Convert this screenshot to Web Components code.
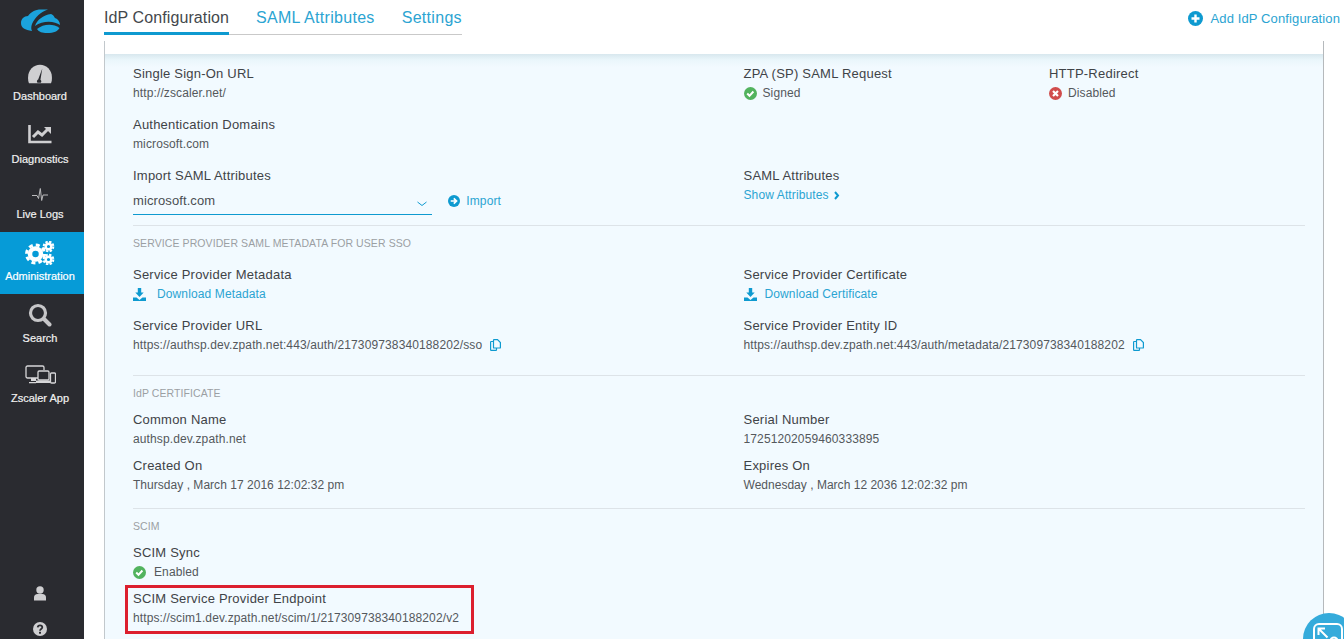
<!DOCTYPE html>
<html>
<head>
<meta charset="utf-8">
<title>IdP Configuration</title>
<style>
  html, body { margin: 0; height: 100%; overflow: hidden; background: #fff; }
  body { font-family: "Liberation Sans", Arial, sans-serif; }
</style>
</head>
<body>
<zs-app>
  <zs-sidebar slot="sidebar">
    <zs-nav-item label="Dashboard" style="--h:62px;--gap:0px">
      <svg width="26" height="22" viewBox="0 0 28 24"><path fill="#cfcfd1" d="M2 22C1 20 1 18 1 15.500 1 8 7 2 14 2s13 6 13 13.500c0 2.500 0 4.500-1 6.500z"/><path fill="#2a2b30" d="M16.500 6l-2 12.200c1.200.8 1.300 2.300.3 3.300h-3.600c-1-1.200-.6-2.900.8-3.500z"/></svg>
    </zs-nav-item>
    <zs-nav-item label="Diagnostics" style="--h:63px;--gap:3px">
      <svg width="24" height="20" viewBox="0 0 24 20"><path fill="none" stroke="#cfcfd1" stroke-width="2.600" d="M1.500 1v17h22"/><path fill="none" stroke="#cfcfd1" stroke-width="3" d="M5 13l5-5 4 3 6-6"/><path fill="#cfcfd1" d="M16 3h7v7z"/></svg>
    </zs-nav-item>
    <zs-nav-item label="Live Logs" style="--h:55px;--gap:-3px">
      <svg width="16" height="16" viewBox="0 0 16 16"><path fill="none" stroke="#b9b9bb" d="M0 8.500h5l1.500 3L8.300 1.500l1.400 12L11 8h5"/></svg>
    </zs-nav-item>
    <zs-nav-item label="Administration" active style="--h:62px;--gap:1px">
      <svg width="30" height="24" viewBox="0 0 30 24">
        <g fill="none" stroke="#fff">
          <circle cx="10.500" cy="13" r="5.500" stroke-width="4.500"/><circle cx="10.500" cy="13" r="9" stroke-width="3" stroke-dasharray="4 3.070"/>
          <circle cx="23.500" cy="5.500" r="2.800" stroke-width="2.400"/><circle cx="23.500" cy="5.500" r="4.800" stroke-width="2" stroke-dasharray="2.400 1.370"/>
          <circle cx="23.500" cy="18.500" r="2.800" stroke-width="2.400"/><circle cx="23.500" cy="18.500" r="4.800" stroke-width="2" stroke-dasharray="2.400 1.370"/>
        </g>
      </svg>
    </zs-nav-item>
    <zs-nav-item label="Search" style="--h:62px;--gap:1px">
      <svg width="24" height="24" viewBox="0 0 24 24"><circle cx="10" cy="10" r="7.500" fill="none" stroke="#c6c6c8" stroke-width="3.200"/><path stroke="#c6c6c8" stroke-width="4" stroke-linecap="round" d="M16 16l5.500 5.500"/></svg>
    </zs-nav-item>
    <zs-nav-item label="Zscaler App" style="--h:60px;--gap:1px">
      <svg width="31" height="20" viewBox="0 0 31 20" fill="none" stroke="#d6d6d8" stroke-width="1.300"><path d="M13 13H2.500A1.500 1.500 0 0 1 1 11.500v-9A1.500 1.500 0 0 1 2.500 1h15A1.500 1.500 0 0 1 19 2.500V5"/><path fill="#d6d6d8" stroke="none" d="M6 13h5v3H6zM4 17h7v1.200H4z"/><rect x="13" y="6" width="11" height="9" rx="1.200"/><path fill="#d6d6d8" stroke="none" d="M11 15.500h14v2.500H11z"/><rect x="25.500" y="8" width="5" height="10" rx="1" fill="#2a2b30"/></svg>
    </zs-nav-item>
    <zs-nav-foot>
      <svg width="14" height="15" viewBox="0 0 14 15"><circle cx="7" cy="4" r="3.700" fill="#cfcfd1"/><path fill="#cfcfd1" d="M1 14.500v-3C1 9.500 2.500 8 4.500 8h5c2 0 3.500 1.500 3.500 3.500v3z"/></svg>
      <svg width="14" height="14" viewBox="0 0 14 14"><circle cx="7" cy="7" r="7" fill="#cfcfd1"/><path fill="none" stroke="#2a2b30" stroke-width="1.800" d="M4.700 5.400C4.800 4 5.800 3.300 7 3.300c1.300 0 2.300.8 2.300 2 0 1.800-2.300 1.700-2.300 3.500"/><rect x="6" y="9.800" width="2" height="1.900" fill="#2a2b30"/></svg>
    </zs-nav-foot>
  </zs-sidebar>

  <zs-header slot="header">
    <zs-tab active>IdP Configuration</zs-tab>
    <zs-tab>SAML Attributes</zs-tab>
    <zs-tab>Settings</zs-tab>
    <zs-add slot="action">Add IdP Configuration</zs-add>
  </zs-header>

  <zs-panel slot="panel">
    <zs-row style="--after:11px">
      <zs-field label="Single Sign-On URL">http://zscaler.net/</zs-field>
      <zs-field label="ZPA (SP) SAML Request"><zs-status type="ok">Signed</zs-status></zs-field>
      <zs-field label="HTTP-Redirect"><zs-status type="bad">Disabled</zs-status></zs-field>
    </zs-row>
    <zs-row style="--after:11px">
      <zs-field label="Authentication Domains">microsoft.com</zs-field>
    </zs-row>
    <zs-row style="--after:0px">
      <zs-field label="Import SAML Attributes"><zs-import>microsoft.com</zs-import></zs-field>
      <zs-field label="SAML Attributes"><zs-link>Show Attributes <svg width="6" height="9" viewBox="0 0 6 9" style="margin-left:2px"><path fill="none" stroke="#0e9ad0" stroke-width="2" d="M1 1l3 3.500L1 8"/></svg></zs-link></zs-field>
    </zs-row>

    <zs-section-head style="--top:10px;--after:13px">SERVICE PROVIDER SAML METADATA FOR USER SSO</zs-section-head>
    <zs-row style="--after:11px">
      <zs-field label="Service Provider Metadata"><zs-download gap="11">Download Metadata</zs-download></zs-field>
      <zs-field label="Service Provider Certificate"><zs-download gap="8">Download Certificate</zs-download></zs-field>
    </zs-row>
    <zs-row style="--after:20px">
      <zs-field label="Service Provider URL"><zs-copy>https://authsp.dev.zpath.net:443/auth/217309738340188202/sso</zs-copy></zs-field>
      <zs-field label="Service Provider Entity ID"><zs-copy>https://authsp.dev.zpath.net:443/auth/metadata/217309738340188202</zs-copy></zs-field>
    </zs-row>

    <zs-section-head style="--top:0px;--after:8px">IdP CERTIFICATE</zs-section-head>
    <zs-row style="--after:6px">
      <zs-field label="Common Name">authsp.dev.zpath.net</zs-field>
      <zs-field label="Serial Number">17251202059460333895</zs-field>
    </zs-row>
    <zs-row style="--after:13px">
      <zs-field label="Created On" style="--value-ls:.03px">Thursday , March 17 2016 12:02:32 pm</zs-field>
      <zs-field label="Expires On" style="--value-ls:.02px">Wednesday , March 12 2036 12:02:32 pm</zs-field>
    </zs-row>

    <zs-section-head style="--top:0px;--after:8px">SCIM</zs-section-head>
    <zs-row style="--after:6px">
      <zs-field label="SCIM Sync"><zs-status type="ok" wide>Enabled</zs-status></zs-field>
    </zs-row>
    <zs-row style="--after:0px">
      <zs-highlight><zs-field label="SCIM Service Provider Endpoint">https://scim1.dev.zpath.net/scim/1/217309738340188202/v2</zs-field></zs-highlight>
    </zs-row>
  </zs-panel>

  <zs-expand slot="overlay"></zs-expand>
</zs-app>

<script>
  function shadow(host, html) {
    host.attachShadow({ mode: 'open' });
    host.shadowRoot.innerHTML = html;
  }

  // plain elements: only markup and styles, no attributes to read
  function simple(name, html) {
    customElements.define(name, class extends HTMLElement {
      connectedCallback() { if (!this.shadowRoot) shadow(this, html); }
    });
  }

  const BLUE = '#0e9ad0';
  const LINK = '#2ba4d2';

  simple('zs-app', `
    <style>
      :host { display: flex; width: 1344px; height: 639px; overflow: hidden; position: relative; }
      .main { flex: 1; min-width: 0; display: flex; flex-direction: column; }
    </style>
    <slot name="sidebar"></slot>
    <div class="main"><slot name="header"></slot><slot name="panel"></slot></div>
    <slot name="overlay"></slot>
  `);

  simple('zs-sidebar', `
    <style>
      :host { display: flex; flex-direction: column; width: 84px; height: 639px; flex: none; background: #2a2b30; }
      .logo { height: 52px; display: flex; padding: 9px 0 0 21px; box-sizing: border-box; }
    </style>
    <div class="logo">
      <svg width="39" height="24" viewBox="0 0 39 24">
        <path fill="#1ba3dc" d="M0 14C0 10 3 7 7 7 10 3 14 .5 20 .5H27C20 3 14 8 11 15 10 18 10 20 11 22 4 21 0 19 0 14z"/>
        <path fill="#1ba3dc" d="M14 17C16 11 22 6 30 5c3 1 3 3 4 4 3 1 5 4 5 7C34 12 22 11 14 17z"/>
        <path fill="#1ba3dc" d="M16 20c6-5 16-6 22.500-1C37 22 33 24 26 24c-5 0-8-1-10-4z"/>
      </svg>
    </div>
    <slot></slot>
  `);

  customElements.define('zs-nav-item', class extends HTMLElement {
    connectedCallback() {
      shadow(this, `
        <style>
          :host { display: flex; flex-direction: column; align-items: center; justify-content: flex-end;
                  height: var(--h); box-sizing: border-box; padding: 0 4px 11px 0; flex: none;
                  color: #f1f1f1; font: 11px/14px "Liberation Sans", Arial, sans-serif; -webkit-text-stroke: .2px currentColor; }
          :host([active]) { background: #069bd7; color: #fff; }
          .icon { height: 30px; display: flex; align-items: center; justify-content: center; margin-bottom: var(--gap); }
        </style>
        <div class="icon"><slot></slot></div>
        <div>${this.getAttribute('label')}</div>
      `);
    }
  });

  simple('zs-nav-foot', `
    <style>
      :host { display: flex; flex-direction: column; align-items: center; gap: 21px; margin-top: auto; padding: 0 4px 3px 0; }
    </style>
    <slot></slot>
  `);

  simple('zs-header', `
    <style>
      :host { display: flex; height: 41px; flex: none; padding-left: 20px; padding-right: 4px; justify-content: space-between; }
      .tabs { display: flex; gap: 27px; height: 34px; border-bottom: 1px solid #c9c9c9; }
    </style>
    <div class="tabs"><slot></slot></div>
    <slot name="action"></slot>
  `);

  simple('zs-tab', `
    <style>
      :host { display: block; height: 35px; box-sizing: border-box; padding-top: 7px; color: ${LINK};
              font: 16px/21px "Liberation Sans", Arial, sans-serif; letter-spacing: .3px; }
      :host([active]) { color: #44484c; border-bottom: 3px solid ${BLUE}; letter-spacing: .1px; }
    </style>
    <slot></slot>
  `);

  simple('zs-add', `
    <style>
      :host { display: flex; align-items: center; gap: 8px; height: 37px; color: ${LINK};
              font: 13px "Liberation Sans", Arial, sans-serif; letter-spacing: .12px; }
    </style>
    <svg width="15" height="15" viewBox="0 0 15 15"><circle cx="7.500" cy="7.500" r="7.500" fill="${BLUE}"/><path stroke="#fff" stroke-width="2.400" d="M3.500 7.500h8M7.500 3.500v8"/></svg>
    <span><slot></slot></span>
  `);

  simple('zs-panel', `
    <style>
      :host { display: block; flex: 1; width: 1220px; box-sizing: border-box; padding-top: 13px; margin-left: 20px;
              border-left: 1px solid #c2c8cc; border-right: 1px solid #b5b9bc; }
      .body { height: 100%; box-sizing: border-box; padding: 9px 18px 0 28px;
              background: linear-gradient(#d8e7ee 0, #eaf6fb 6px, #f2faff 13px); }
    </style>
    <div class="body"><slot></slot></div>
  `);

  simple('zs-row', `
    <style>
      :host { display: grid; grid-template-columns: 610.500px 305.500px 1fr; margin-bottom: var(--after, 11px); }
    </style>
    <slot></slot>
  `);

  customElements.define('zs-field', class extends HTMLElement {
    connectedCallback() {
      shadow(this, `
        <style>
          :host { display: block; font-family: "Liberation Sans", Arial, sans-serif; }
          .label { font-size: 13px; line-height: 18px; padding-top: 2px; color: #3f4347; letter-spacing: .22px; white-space: nowrap; }
          .value { font-size: 12px; line-height: 20px; color: #54585c; letter-spacing: var(--value-ls, .12px); white-space: nowrap; }
        </style>
        <div class="label">${this.getAttribute('label')}</div>
        <div class="value"><slot></slot></div>
      `);
    }
  });

  simple('zs-section-head', `
    <style>
      :host { display: block; margin-top: var(--top); margin-bottom: var(--after); border-top: 1px solid #dde3e8; padding-top: 9px;
              font: 10.500px/16px "Liberation Sans", Arial, sans-serif; color: #9b9fa3; letter-spacing: .09px; }
    </style>
    <slot></slot>
  `);

  customElements.define('zs-status', class extends HTMLElement {
    connectedCallback() {
      const ok = this.getAttribute('type') === 'ok';
      const mark = ok
        ? '<path fill="none" stroke="#fff" stroke-width="2" d="M3.200 6.500l2.300 2.300 3.900-4.300"/>'
        : '<path stroke="#fff" stroke-width="2.200" d="M4 4l5 5M9 4l-5 5"/>';
      shadow(this, `
        <style>
          :host { display: flex; align-items: center; gap: ${this.hasAttribute('wide') ? 8 : 6}px; }
        </style>
        <svg width="13" height="13" viewBox="0 0 13 13"><circle cx="6.500" cy="6.500" r="6.500" fill="${ok ? '#52b35e' : '#d04c4c'}"/>${mark}</svg>
        <span><slot></slot></span>
      `);
    }
  });

  simple('zs-link', `
    <style>
      :host { color: ${LINK}; display: inline-flex; align-items: center; gap: 3px; }
    </style>
    <slot></slot>
  `);

  simple('zs-import', `
    <style>
      :host { display: flex; align-items: center; gap: 16px; margin-top: 6px; width: 368px; }
      .select { width: 300.500px; height: 24px; box-sizing: border-box; border-bottom: 1px solid ${BLUE}; display: flex;
                justify-content: space-between; align-items: center; padding: 0 5px 0 0; font-size: 13px; color: #4a4e52; letter-spacing: .1px; }
      .select span { margin-top: -4px; }
      .select svg { margin-top: 2px; }
      .go { display: flex; align-items: center; gap: 6px; color: ${LINK}; margin-top: -4px; }
    </style>
    <div class="select"><span><slot></slot></span>
      <svg width="10" height="6" viewBox="0 0 10 6"><path fill="none" stroke="${BLUE}" d="M.5 1l4.500 3.500L9.500 1"/></svg></div>
    <div class="go">
      <svg width="12" height="12" viewBox="0 0 11 11"><circle cx="5.500" cy="5.500" r="5.500" fill="${BLUE}"/><path fill="none" stroke="#fff" stroke-width="1.600" d="M2.500 5.500h5M5.300 3l2.500 2.500L5.300 8"/></svg>
      Import
    </div>
  `);

  customElements.define('zs-download', class extends HTMLElement {
    connectedCallback() {
      shadow(this, `
        <style>
          :host { display: flex; align-items: center; gap: ${this.getAttribute('gap')}px; color: ${LINK}; }
        </style>
        <svg width="13" height="13" viewBox="0 0 13 13"><path fill="${BLUE}" d="M4.800 0h3.400v4.500h2.500L6.500 9 2.300 4.500h2.500zM0 9.500h3.500L6.500 12 9.500 9.500H13V13H0z"/></svg>
        <span><slot></slot></span>
      `);
    }
  });

  simple('zs-copy', `
    <style>
      :host { display: flex; align-items: center; gap: 8px; }
      span, svg { flex: none; }
    </style>
    <span><slot></slot></span>
    <svg width="11" height="12" viewBox="0 0 11 12" fill="none" stroke="${BLUE}" stroke-width="1.200"><path d="M3.500 2.500H1.200a.6.600 0 0 0-.6.600v7.700c0 .3.300.6.600.6h4.700c.3 0 .6-.3.600-.6V9"/><path d="M7.500.6H4.100a.6.600 0 0 0-.6.600v7.200c0 .3.300.6.600.6h5.700c.3 0 .6-.3.600-.6V3.500z"/></svg>
  `);

  simple('zs-highlight', `
    <style>
      :host { display: block; position: relative; }
      .mark { position: absolute; top: -3px; left: -8px; width: 349px; height: 49px; box-sizing: border-box; border: 3px solid #dc1f2e; pointer-events: none; }
    </style>
    <slot></slot>
    <div class="mark"></div>
  `);

  simple('zs-expand', `
    <style>
      :host { position: absolute; left: 1303px; top: 613px; width: 52px; height: 52px; border-radius: 50%; background: #35abdb; }
      svg { position: absolute; left: 10px; top: 10px; }
    </style>
    <svg width="32" height="32" viewBox="0 0 32 32" fill="none" stroke="#fff" stroke-width="2"><rect x="1" y="1" width="28" height="28" rx="5"/><path d="M5.500 5.500l9 9M5.500 12V5.500H12"/><circle cx="21" cy="18" r="3.500" fill="#35abdb"/></svg>
  `);
</script>
</body>
</html>
